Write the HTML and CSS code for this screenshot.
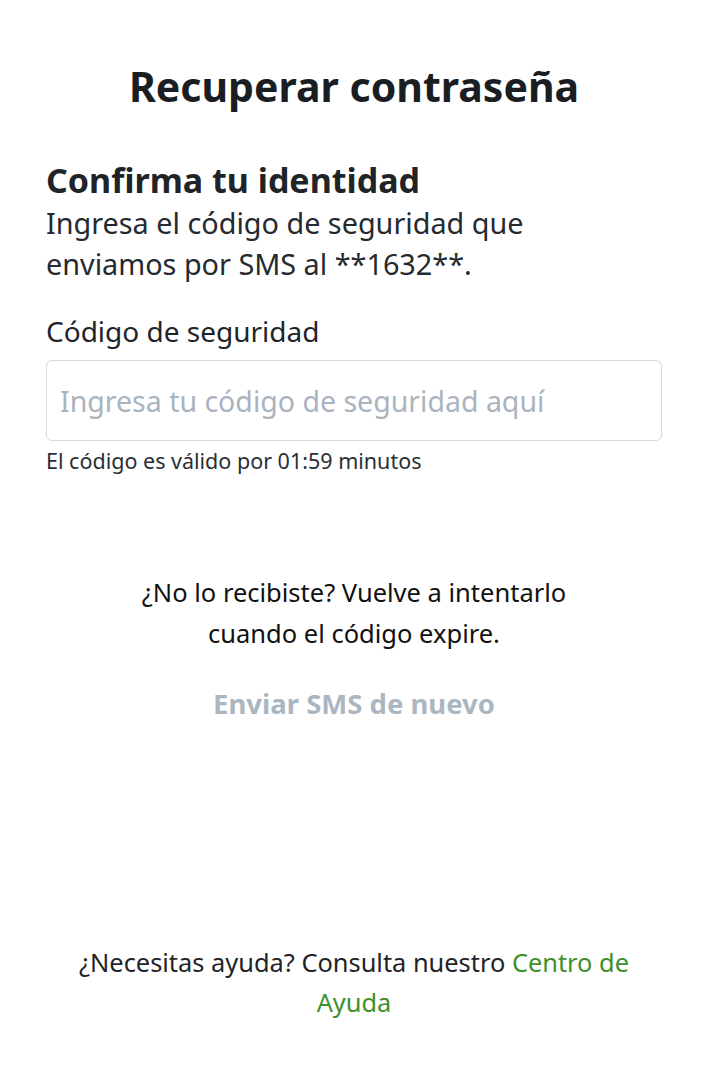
FILE: index.html
```html
<!DOCTYPE html>
<html lang="es">
<head>
<meta charset="utf-8">
<title>Recuperar contraseña</title>
<link rel="stylesheet" href="styles.css">
</head>
<body>
<main class="page">
  <h1 class="title">Recuperar contraseña</h1>
  <section class="identity">
    <h2 class="subtitle">Confirma tu identidad</h2>
    <p class="intro">Ingresa el código de seguridad que enviamos por SMS al **1632**.</p>
  </section>
  <section class="field">
    <label class="label" for="code">Código de seguridad</label>
    <input class="input" id="code" type="text" placeholder="Ingresa tu código de seguridad aquí">
    <p class="hint">El código es válido por 01:59 minutos</p>
  </section>
  <section class="resend">
    <p class="resend-text">¿No lo recibiste? Vuelve a intentarlo<br>cuando el código expire.</p>
    <button class="resend-btn" type="button" disabled>Enviar SMS de nuevo</button>
  </section>
  <footer class="help">
    <p class="help-text">¿Necesitas ayuda? Consulta nuestro <a class="help-link" href="#">Centro de</a><br><a class="help-link" href="#">Ayuda</a></p>
  </footer>
</main>
</body>
</html>
```

FILE: styles.css
```css
* { box-sizing: border-box; }
html, body { margin: 0; padding: 0; background: #fff; }
body {
  font-family: "Noto Sans", "Open Sans", sans-serif;
  color: #1f2429;
}
.page {
  width: 704px;
  min-height: 1084px;
  padding: 61px 42px 0 46px;
  display: flex;
  flex-direction: column;
}
.title {
  margin: 0;
  text-align: center;
  font-size: 41px;
  font-weight: 700;
  line-height: 50px;
  color: #1a1e23;
}
.identity { margin-top: 49px; }
.subtitle {
  margin: 0;
  font-size: 34px;
  font-weight: 700;
  line-height: 40px;
  color: #1f2429;
}
.intro {
  margin: 2px 0 0;
  font-size: 28.8px;
  line-height: 41px;
  width: 545px;
  color: #252a30;
}
.field { margin-top: 29px; display: flex; flex-direction: column; }
.label { font-size: 28px; line-height: 36px; color: #1f2429; }
.input {
  margin-top: 11px;
  height: 81px;
  width: 616px;
  border: 1.5px solid #d5dade;
  border-radius: 6px;
  padding: 0 13px;
  font-family: inherit;
  font-size: 28.5px;
  color: #1f2429;
  outline: none;
}
.input::placeholder { color: #a9b4bf; }
.hint { margin: 7px 0 0; font-size: 21.5px; line-height: 26px; color: #2a2f35; }
.resend { margin-top: 98px; text-align: center; display: flex; flex-direction: column; align-items: center; }
.resend-text { margin: 0; font-size: 25.5px; line-height: 41px; color: #111; }
.resend-btn {
  margin-top: 35px;
  border: none;
  background: none;
  padding: 0;
  font-family: inherit;
  font-size: 27.5px;
  font-weight: 700;
  line-height: 30px;
  color: #aab6c1;
}
.help { margin-top: auto; padding-bottom: 62px; text-align: center; }
.help-text { margin: 0 auto; font-size: 25.4px; line-height: 40px; width: 600px; color: #1f2429; }
.help-link { color: #3f8f2a; text-decoration: none; }
```
